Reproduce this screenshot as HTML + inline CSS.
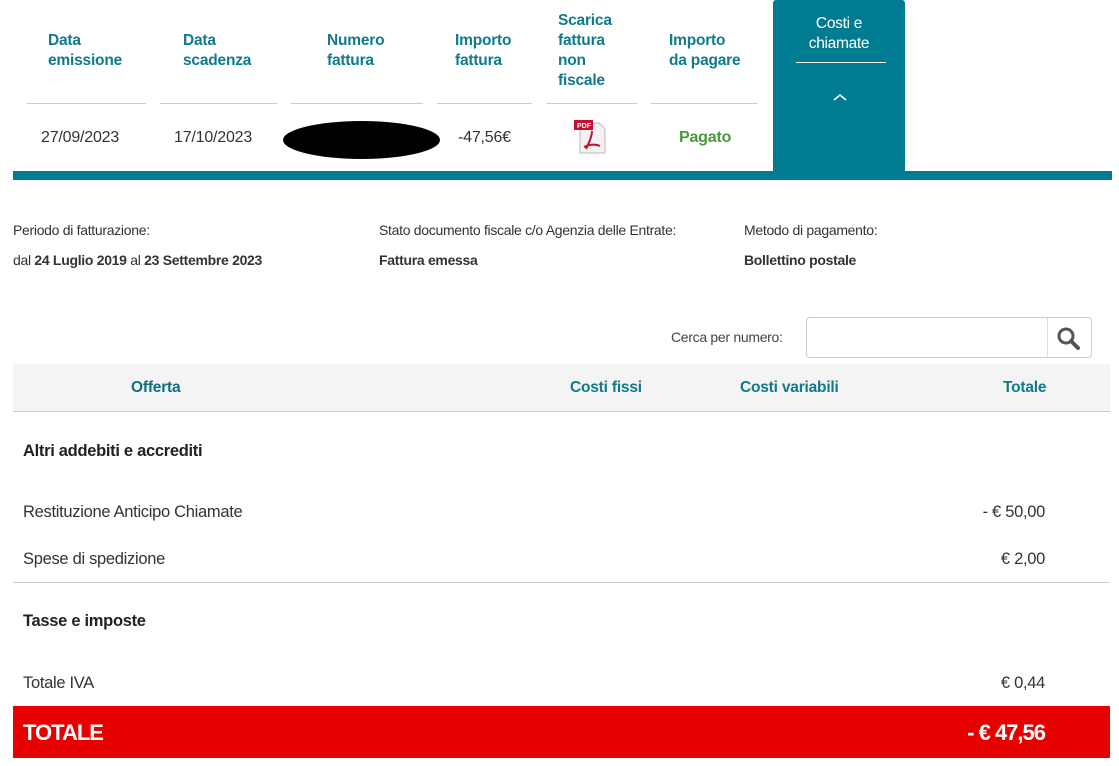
<!DOCTYPE html><html><head><meta charset="utf-8"><style>
body{margin:0;width:1119px;height:766px;background:#fff;font-family:"Liberation Sans",sans-serif;color:#333;position:relative;overflow:hidden}
.a{position:absolute;white-space:nowrap}
.h{color:#0f7a8c;font-weight:bold;font-size:15.5px;line-height:20px;letter-spacing:-0.2px}
.ln{position:absolute;top:103px;height:1px;background:#ccc}
.v{font-size:16px;top:129px;letter-spacing:-0.2px}
.s{font-size:14px;letter-spacing:-0.3px}
.r{font-size:16.5px;letter-spacing:-0.3px}
</style></head><body>
<div class="a h" style="left:48px;top:31px">Data<br>emissione</div>
<div class="a h" style="left:183px;top:31px">Data<br>scadenza</div>
<div class="a h" style="left:327px;top:31px">Numero<br>fattura</div>
<div class="a h" style="left:455px;top:31px">Importo<br>fattura</div>
<div class="a h" style="left:558px;top:11px">Scarica<br>fattura<br>non<br>fiscale</div>
<div class="a h" style="left:669px;top:31px">Importo<br>da pagare</div>
<div class="ln" style="left:27px;width:119px"></div>
<div class="ln" style="left:160px;width:117px"></div>
<div class="ln" style="left:291px;width:132px"></div>
<div class="ln" style="left:437px;width:95px"></div>
<div class="ln" style="left:546px;width:91px"></div>
<div class="ln" style="left:651px;width:107px"></div>
<div class="a v" style="left:41px">27/09/2023</div>
<div class="a v" style="left:174px">17/10/2023</div>
<div style="position:absolute;left:283px;top:121px;width:157px;height:38px;border-radius:50%;background:#000"></div>
<div class="a v" style="left:458px">-47,56€</div>
<svg class="a" style="left:572px;top:119px" width="38" height="36" viewBox="0 0 38 36"><path d="M8 4h19l6 6v24H8z" fill="#f2f2f2" stroke="#bbb"/><rect x="2" y="1" width="19" height="10" fill="#c8102e"/><text x="5" y="9" font-size="7" fill="#fff" font-weight="bold" font-family="Liberation Sans">PDF</text><path d="M14 30c4-8 6-14 6-18M12 28c6-3 12-3 16-1" stroke="#c8102e" stroke-width="2" fill="none"/></svg>
<div class="a" style="left:679px;top:129px;font-size:16px;font-weight:bold;color:#4a9a3a;letter-spacing:-0.2px">Pagato</div>
<div style="position:absolute;left:773px;top:0;width:132px;height:175px;background:#007c92;border-radius:3px 3px 0 0"></div>
<div class="a" style="left:773px;width:132px;top:14px;text-align:center;color:#fff;font-size:15.5px;line-height:20px;letter-spacing:-0.3px">Costi e<br>chiamate</div>
<div style="position:absolute;left:796px;top:62px;width:90px;height:1px;background:#fff"></div>
<svg class="a" style="left:832px;top:92px" width="16" height="10"><path d="M2 8l6-5 6 5" stroke="#fff" stroke-width="1.5" fill="none"/></svg>
<div style="position:absolute;left:13px;top:171px;width:1099px;height:9px;background:#007c92"></div>
<div class="a s" style="left:13px;top:222px">Periodo di fatturazione:</div>
<div class="a s" style="left:13px;top:252px">dal <b>24 Luglio 2019</b> al <b>23 Settembre 2023</b></div>
<div class="a s" style="left:379px;top:222px">Stato documento fiscale c/o Agenzia delle Entrate:</div>
<div class="a s" style="left:379px;top:252px;font-weight:bold">Fattura emessa</div>
<div class="a s" style="left:744px;top:222px">Metodo di pagamento:</div>
<div class="a s" style="left:744px;top:252px;font-weight:bold">Bollettino postale</div>
<div class="a s" style="left:671px;top:329px;color:#444">Cerca per numero:</div>
<div style="position:absolute;left:806px;top:317px;width:284px;height:39px;border:1px solid #ccc;border-radius:4px"></div>
<div style="position:absolute;left:1047px;top:318px;width:1px;height:39px;background:#ddd"></div>
<svg class="a" style="left:1056px;top:326px" width="26" height="26"><circle cx="10" cy="10" r="7" stroke="#555" stroke-width="3" fill="none"/><path d="M15 15l7 7" stroke="#555" stroke-width="4" stroke-linecap="round"/></svg>
<div style="position:absolute;left:13px;top:364px;width:1097px;height:47px;background:#f4f4f4;border-bottom:1px solid #ccc"></div>
<div class="a h" style="left:131px;top:378px;color:#0f6f80">Offerta</div>
<div class="a h" style="left:570px;top:378px">Costi fissi</div>
<div class="a h" style="left:740px;top:378px">Costi variabili</div>
<div class="a h" style="left:1003px;top:378px">Totale</div>
<div class="a r" style="left:23px;top:442px;font-weight:bold;color:#222">Altri addebiti e accrediti</div>
<div class="a r" style="left:23px;top:503px">Restituzione Anticipo Chiamate</div>
<div class="a r" style="right:74px;top:503px">- € 50,00</div>
<div class="a r" style="left:23px;top:550px">Spese di spedizione</div>
<div class="a r" style="right:74px;top:550px">€ 2,00</div>
<div style="position:absolute;left:13px;top:582px;width:1097px;height:1px;background:#ccc"></div>
<div class="a r" style="left:23px;top:612px;font-weight:bold;color:#222">Tasse e imposte</div>
<div class="a r" style="left:23px;top:674px">Totale IVA</div>
<div class="a r" style="right:74px;top:674px">€ 0,44</div>
<div style="position:absolute;left:13px;top:706px;width:1097px;height:52px;background:#e60000"></div>
<div class="a" style="left:23px;top:720px;color:#fff;font-weight:bold;font-size:22px;letter-spacing:-1px">TOTALE</div>
<div class="a" style="right:74px;top:720px;color:#fff;font-weight:bold;font-size:22px;letter-spacing:-1px">- € 47,56</div>
</body></html>
